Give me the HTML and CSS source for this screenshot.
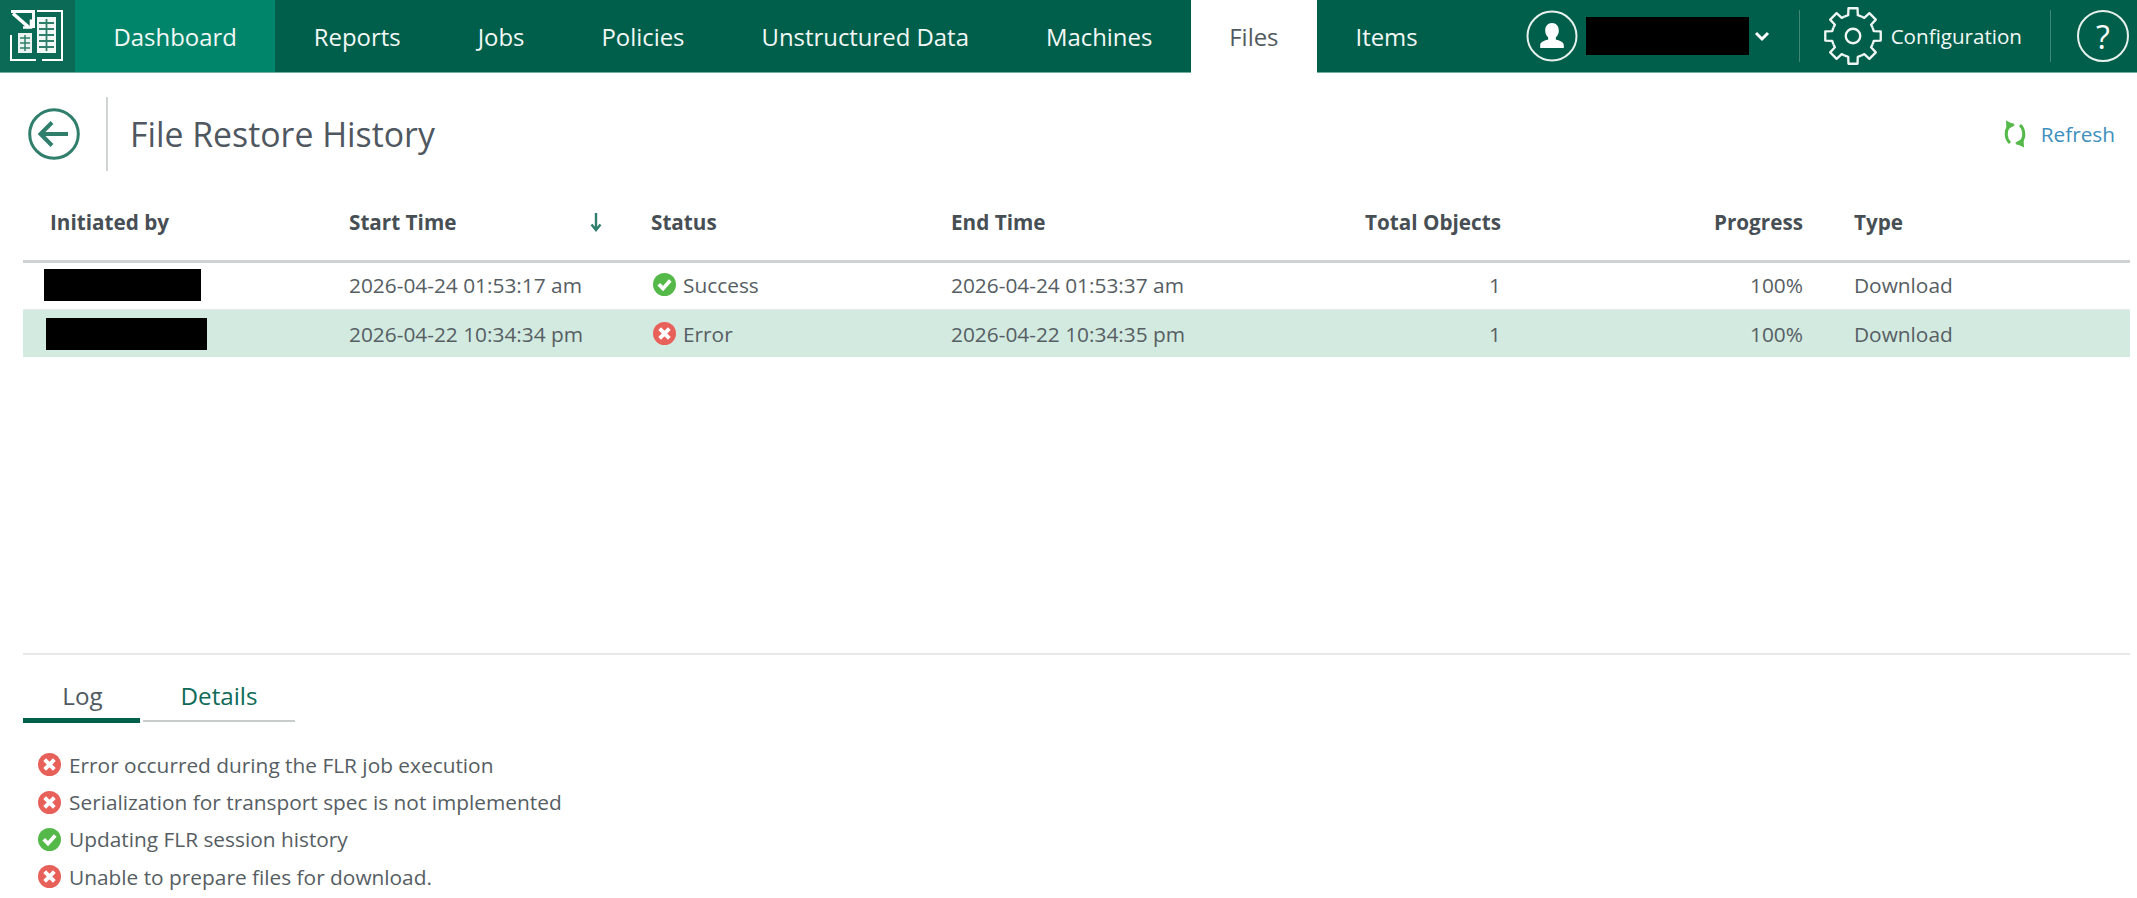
FILE: index.html
```html
<!DOCTYPE html>
<html lang="en">
<head>
<meta charset="utf-8">
<title>File Restore History</title>
<link rel="stylesheet" href="styles.css">
</head>
<body>
<svg class="defs" width="0" height="0" aria-hidden="true">
  <defs>
    <symbol id="ok" viewBox="0 0 20 20"><circle cx="10" cy="10" r="10" fill="#54b948"/><path d="M5 9.800l3.700 3.800 6.300-7" fill="none" stroke="#fff" stroke-width="3.200"/></symbol>
    <symbol id="err" viewBox="0 0 20 20"><circle cx="10" cy="10" r="10" fill="#e8605a"/><path d="M5.800 5.800l8.400 8.400M14.200 5.800l-8.400 8.400" fill="none" stroke="#fff" stroke-width="3.400"/></symbol>
    <path id="tooth" d="M-8.42-20.33L-4.95-21.44L-4.69-28.63L4.69-28.63L4.95-21.44L8.42-20.33"/>
  </defs>
</svg>
<header class="nav">
  <div class="logo">
    <svg width="54" height="52" viewBox="0 0 54 52" fill="none" stroke="#fff">
      <path d="M1 1.500h22.500V18" stroke-width="3"/>
      <path d="M3 3.500l16 14" stroke-width="3.600"/>
      <path d="M13 17.500h8v-8" stroke-width="2.600"/>
      <path d="M27 1h25v49H32M1 25v25h25" stroke-width="2"/>
      <rect x="27" y="7" width="19" height="36" fill="#f2f8f6" stroke="none"/>
      <path d="M29 13h15M29 19h15M29 25h15M29 31h15M29 37h15M36.500 9v32" stroke="#2f7f6c" stroke-width="1.800"/>
      <rect x="8" y="23" width="14" height="20" fill="#eaf3f0" stroke="none"/>
      <path d="M10 28h10M10 33h10M10 38h10M15 25v16" stroke="#2f7f6c" stroke-width="1.500"/>
    </svg>
  </div>
  <nav class="tabs">
    <a class="tab tab-active">Dashboard</a>
    <a class="tab">Reports</a>
    <a class="tab">Jobs</a>
    <a class="tab">Policies</a>
    <a class="tab">Unstructured Data</a>
    <a class="tab">Machines</a>
    <a class="tab tab-current">Files</a>
    <a class="tab">Items</a>
  </nav>
  <div class="user-tools">
    <svg class="ring-icon" width="52" height="52" viewBox="0 0 52 52">
      <circle cx="26" cy="26" r="24.500" fill="none" stroke="#e6f0ed" stroke-width="2"/>
      <path d="M26 13c4.300 0 6.800 3.200 6.800 7.600 0 3-1.200 5.400-3 6.800v2.200c3.800 1 8 2.600 8 5.400V38H14.200v-3c0-2.800 4.200-4.400 8-5.400v-2.200c-1.800-1.400-3-3.800-3-6.800C19.200 16.200 21.700 13 26 13z" fill="#fff"/>
    </svg>
    <span class="user-name"></span>
    <svg class="chevron" width="16" height="12" viewBox="0 0 16 12"><path d="M2 3l6 6 6-6" fill="none" stroke="#fff" stroke-width="3"/></svg>
    <span class="vsep vsep-a"></span>
    <svg class="gear" width="62" height="62" viewBox="-32 -32 64 64" fill="none" stroke="#f0f6f4" stroke-width="2.400" stroke-linejoin="round">
      <use href="#tooth"/>
      <use href="#tooth" transform="rotate(45)"/>
      <use href="#tooth" transform="rotate(90)"/>
      <use href="#tooth" transform="rotate(135)"/>
      <use href="#tooth" transform="rotate(180)"/>
      <use href="#tooth" transform="rotate(225)"/>
      <use href="#tooth" transform="rotate(270)"/>
      <use href="#tooth" transform="rotate(315)"/>
      <circle r="7.500"/>
    </svg>
    <span class="config">Configuration</span>
    <span class="vsep vsep-b"></span>
    <span class="help">?</span>
  </div>
</header>

<main class="page">
  <div class="title-row">
    <svg class="back" width="52" height="52" viewBox="0 0 52 52" fill="none" stroke="#2f7f6c">
      <circle cx="26" cy="26" r="24.300" stroke-width="3"/>
      <path d="M40 26H13M24 14.500L12.500 26 24 37.500" stroke-width="4"/>
    </svg>
    <span class="title-sep"></span>
    <h1 class="title">File Restore History</h1>
    <a class="refresh">
      <svg width="24" height="28" viewBox="0 0 24 28" fill="none" stroke="#54b948" stroke-width="3">
        <path d="M7 23C2.500 19 2 11 5.500 7c1.500-1.500 3-2.300 5-2.500"/>
        <path d="M3 0.500l9 4.500-8.500 5z" fill="#54b948" stroke="none"/>
        <path d="M17 5c4.500 4 5 12 1.500 16-1.500 1.500-3 2.300-5 2.500"/>
        <path d="M21 27.500l-9-4.500 8.500-5z" fill="#54b948" stroke="none"/>
      </svg>
      <span>Refresh</span>
    </a>
  </div>

  <table class="grid">
    <thead>
      <tr>
        <th class="c1">Initiated by</th>
        <th class="c2"><span class="sort">Start Time<svg width="12" height="20" viewBox="0 0 12 20"><path d="M6 1v16M1.500 12.500L6 18l4.500-5.500" fill="none" stroke="#2f7f6c" stroke-width="2.400"/></svg></span></th>
        <th class="c3">Status</th>
        <th class="c4">End Time</th>
        <th class="c5 num">Total Objects</th>
        <th class="c6 num">Progress</th>
        <th class="c7">Type</th>
      </tr>
    </thead>
    <tbody>
      <tr>
        <td><span class="redact redact-a"></span></td>
        <td>2026-04-24 01:53:17 am</td>
        <td><span class="status"><svg class="ico"><use href="#ok"/></svg>Success</span></td>
        <td>2026-04-24 01:53:37 am</td>
        <td class="num">1</td>
        <td class="num">100%</td>
        <td>Download</td>
      </tr>
      <tr class="selected">
        <td><span class="redact redact-b"></span></td>
        <td>2026-04-22 10:34:34 pm</td>
        <td><span class="status"><svg class="ico"><use href="#err"/></svg>Error</span></td>
        <td>2026-04-22 10:34:35 pm</td>
        <td class="num">1</td>
        <td class="num">100%</td>
        <td>Download</td>
      </tr>
    </tbody>
  </table>

  <section class="bottom">
    <div class="bottom-tabs">
      <span class="btab btab-on">Log</span>
      <span class="btab">Details</span>
    </div>
    <ul class="log">
      <li><svg class="ico"><use href="#err"/></svg>Error occurred during the FLR job execution</li>
      <li><svg class="ico"><use href="#err"/></svg>Serialization for transport spec is not implemented</li>
      <li><svg class="ico"><use href="#ok"/></svg>Updating FLR session history</li>
      <li><svg class="ico"><use href="#err"/></svg>Unable to prepare files for download.</li>
    </ul>
  </section>
</main>
</body>
</html>
```
FILE: styles.css
```css
* { box-sizing: border-box; }
html, body { margin: 0; height: 100%; }
body {
  overflow: hidden;
  background: #fff;
  color: #565e63;
  font-family: "Open Sans", "Liberation Sans", sans-serif;
  font-size: 20.850px;
}
.defs { display: block; height: 0; }

.nav {
  display: flex;
  height: 73px;
  background: #005f4b;
  border-bottom: 1px solid #6fae9e;
  color: #fff;
}
.logo {
  width: 75px;
  flex: none;
  display: flex;
  align-items: center;
  padding-left: 10px;
  background: #0a6a55;
}
.tabs { display: flex; }
.tab {
  display: flex;
  align-items: center;
  padding: 0 38.500px;
  font-size: 23.900px;
  color: #f2f8f6;
}
.tab-active { background: #00856b; }
.tab-current { background: #fff; color: #505a60; height: 73px; }

.user-tools {
  margin-left: auto;
  display: flex;
  align-items: center;
  padding-right: 8px;
}
.user-name { width: 163px; height: 38px; margin-left: 8px; background: #000; }
.chevron { margin-left: 5px; }
.vsep { width: 1px; height: 52px; background: #3f8875; }
.vsep-a { margin-left: 29px; }
.gear { margin-left: 22px; }
.config { margin-left: 7px; font-size: 20.600px; color: #f2f8f6; }
.vsep-b { margin-left: 28px; }
.help {
  width: 52px;
  height: 52px;
  margin-left: 26px;
  display: flex;
  align-items: center;
  justify-content: center;
  border: 2px solid #e6f0ed;
  border-radius: 50%;
  font-size: 32px;
}

.page { padding: 0 7px 0 23px; }

.title-row {
  display: flex;
  align-items: center;
  height: 74px;
  margin-top: 24px;
  padding-left: 5px;
}
.title-sep { width: 2px; height: 74px; margin-left: 26px; background: #d0d4d4; }
.title { margin: 0 0 0 22px; font-size: 33.800px; font-weight: 400; color: #4f5760; }
.refresh {
  margin-left: auto;
  margin-right: 15px;
  display: flex;
  align-items: center;
  gap: 14px;
  color: #3e8fbd;
  font-size: 20.800px;
}

.grid { width: 2107px; border-collapse: collapse; table-layout: fixed; margin-top: 14px; }
.grid th, .grid td { padding: 0; text-align: left; white-space: nowrap; }
.grid th {
  height: 76px;
  font-size: 20.700px;
  font-weight: 700;
  color: #474f55;
  border-bottom: 3px solid #cfd2d2;
}
.grid th:first-child { padding-left: 27px; }
.grid td:first-child { padding-left: 21px; }
.grid tbody tr:first-child td { height: 48px; padding-bottom: 2px; border-bottom: 1px solid #e8ebea; }
.grid tbody tr.selected td { height: 48px; padding-top: 1px; background: #d3eae0; border-bottom: 0; }
.grid .num { text-align: right; padding-right: 0; }
.c1 { width: 326px; }
.c2 { width: 302px; }
.c3 { width: 300px; }
.c4 { width: 300px; }
.c5 { width: 250px; }
.c6 { width: 302px; }
.c7 { padding-left: 51px !important; }
.grid tbody td:last-child { padding-left: 51px; }
.sort { display: inline-flex; align-items: center; width: 253px; justify-content: space-between; }
.status { display: flex; align-items: center; gap: 7px; padding-left: 2px; }
.ico { width: 23px; height: 23px; flex: none; }
.redact { display: block; background: #000; }
.redact-a { width: 157px; height: 32px; }
.redact-b { width: 161px; height: 32px; margin-left: 2px; }

.bottom { margin-top: 296px; border-top: 2px solid #e8e8e8; }
.bottom-tabs { display: flex; gap: 3px; height: 68px; }
.btab {
  width: 152px;
  padding-top: 24px;
  text-align: center;
  font-size: 24.200px;
  line-height: 33px;
  color: #0f6a58;
  border-bottom: 2px solid #c8cccc;
  height: 67px;
}
.btab-on { width: 117px; padding-left: 2px; color: #505a60; border-bottom: 5px solid #005f4b; height: 68px; }
.log { list-style: none; margin: 23px 0 0; padding: 0 0 0 15px; }
.log li { display: flex; align-items: center; gap: 8px; height: 37.400px; font-size: 20.850px; }
```
